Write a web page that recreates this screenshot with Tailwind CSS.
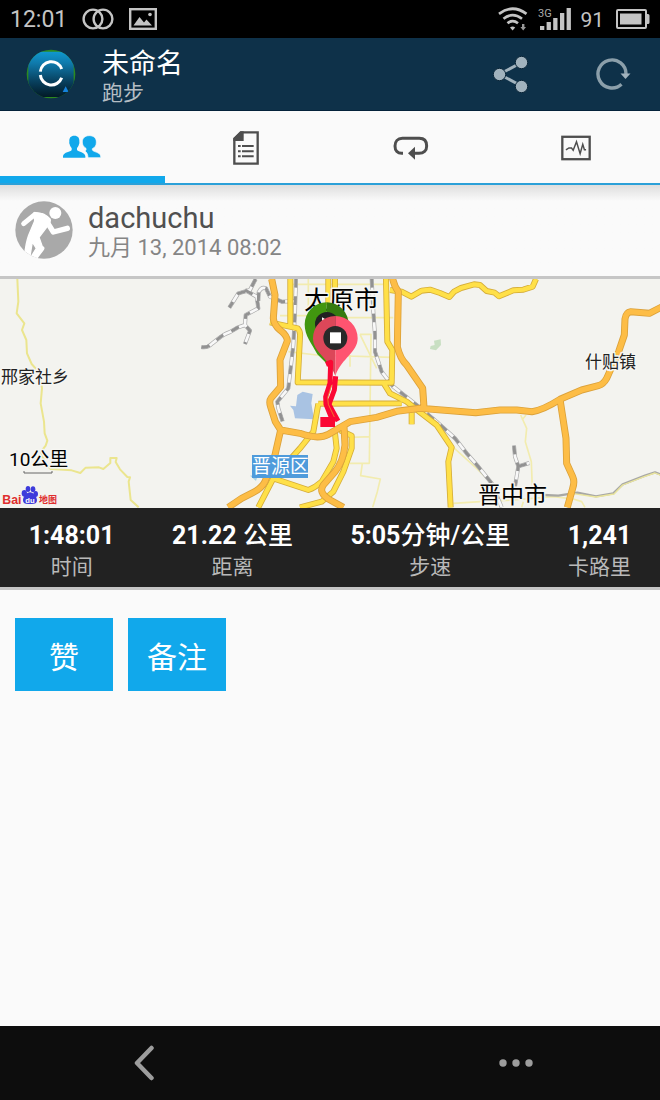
<!DOCTYPE html>
<html lang="zh-CN">
<head>
<meta charset="utf-8">
<meta name="viewport" content="width=device-width, initial-scale=1">
<title>未命名 - 跑步</title>
<script src="https://cdn.jsdelivr.net/npm/@tailwindcss/browser@4"></script>
</head>
<body class="flex min-h-screen flex-col bg-[#fafafa] font-[Roboto,'Noto_Sans_CJK_SC',sans-serif]">

<!-- Status bar -->
<div class="flex h-[38px] items-center justify-between bg-black pl-[10px] pr-[10px] text-[#c4c4c4]">
  <div class="flex items-center">
    <span class="pt-[2px] text-[23px] leading-[36px]">12:01</span>
    <svg class="ml-[15px] h-[22px] w-[32px]" viewBox="0 0 32 22" fill="none" stroke="currentColor" stroke-width="2.4"><circle cx="11" cy="11" r="9.400"/><circle cx="21" cy="11" r="9.400"/></svg>
    <svg class="ml-[15px] h-[22px] w-[28px]" viewBox="0 0 28 22"><rect x="1.200" y="1.200" width="25.600" height="19.600" fill="none" stroke="currentColor" stroke-width="2.400"/><path d="M4.500 17.500 10.500 9l4.500 5.500 2.500-3L23 17.500z" fill="currentColor"/><circle cx="21" cy="6.500" r="1.800" fill="currentColor"/></svg>
  </div>
  <div class="flex items-center">
    <svg class="h-[24px] w-[30px]" viewBox="0 0 30 24" fill="none" stroke="currentColor" stroke-width="2.700"><path d="M1 6.800Q14.600-3.300 28.500 6.800M5.500 11.800Q14.600 4.600 24 11.800M9.500 16.200Q14.600 12 20 16.200"/><path d="M12 20.500a4 4 0 0 1 5.200 0l-2.600 3z" fill="currentColor" stroke="none"/><path d="M24 17h2.400v3H28l-2.800 3.400L22.400 20H24z" fill="#999" stroke="none"/></svg>
    <svg class="ml-[10px] h-[24px] w-[34px]" viewBox="0 0 34 24" fill="currentColor"><text x="0" y="10" font-size="11" fill="#aaa" class="font-[Roboto]">3G</text><path d="M2 19h4.300v4H2zM8.600 15h4.300v8H8.600zM15.200 11h4.300v12h-4.300zM22 6h4.300v17H22zM28.600 1h4.300v22h-4.300z"/></svg>
    <span class="ml-[8px] pt-[2px] text-[21px] leading-[36px]">91</span>
    <svg class="ml-[12px] h-[20px] w-[34px]" viewBox="0 0 34 20"><rect x="1" y="1" width="29" height="18" rx="1" fill="none" stroke="currentColor" stroke-width="2"/><path d="M4 4.500h21.500v11H4zM31 5h1q1.500 0 1.500 1.500v7q0 1.500-1.500 1.500H31z" fill="currentColor"/></svg>
  </div>
</div>

<!-- Action bar -->
<header class="flex h-[73px] items-center justify-between border-b border-[#04223a] bg-[#0e3149] pl-[26px] pr-[29px]">
  <div class="flex items-center gap-[26px]">
    <svg class="h-[50px] w-[50px]" viewBox="77 146 150 150" role="img" aria-label="Connect">
      <defs>
        <linearGradient id="logo" x1="0" y1="0" x2="0" y2="1"><stop offset="0" stop-color="#1098cf"/><stop offset=".25" stop-color="#0f7aac"/><stop offset=".65" stop-color="#08415f"/><stop offset="1" stop-color="#021a27"/></linearGradient>
        <clipPath id="disc"><circle cx="152" cy="221" r="73"/></clipPath>
      </defs>
      <circle cx="152" cy="221" r="73" fill="#2c8a20"/>
      <g clip-path="url(#disc)"><rect x="84" y="154" width="136" height="136" rx="22" fill="url(#logo)"/><path d="M187 275l9-17 9 17z" fill="#1583dd"/></g>
      <path d="M120 214A33 33 0 0 1 184 206M120 224A33 33 0 0 0 184 232" fill="none" stroke="#fff" stroke-width="9"/>
    </svg>
    <div class="pt-[6px]">
      <h1 class="text-[27px] leading-[32px] text-white">未命名</h1>
      <p class="text-[21px] leading-[26px] text-[#b5bec4]">跑步</p>
    </div>
  </div>
  <div class="flex items-center gap-[64px]">
    <button aria-label="分享"><svg class="block h-[38px] w-[38px]" viewBox="0 0 38 38" fill="#a1b2bd" stroke="#a1b2bd"><path d="M28.500 7.500 6.500 19.300 28.500 31" fill="none" stroke-width="3"/><g stroke="#0a2538" stroke-width="1"><circle cx="28.500" cy="7.500" r="6.200"/><circle cx="6.500" cy="19.500" r="6.200"/><circle cx="28.500" cy="31.500" r="6.200"/></g></svg></button>
    <button aria-label="刷新"><svg class="block h-[36px] w-[36px]" viewBox="0 0 36 36"><path d="M26.500 28.200A14 14 0 1 1 31 18" fill="none" stroke="#8b9faa" stroke-width="3.400"/><path d="M25.500 17.500H35.500L30.500 23z" fill="#a1b2bd"/></svg></button>
  </div>
</header>

<!-- Tabs -->
<nav class="grid h-[74px] grid-cols-4 border-b-2 border-[#2ba0d8]" aria-label="活动">
  <button class="flex items-center justify-center border-b-[7px] border-[#11a8eb] pr-[2px] pt-[7px]" aria-label="社交" aria-current="page">
    <svg class="h-[24px] w-[38px]" viewBox="188 77 114 70" fill="#11a8eb"><path d="M222 78c-11 0-16 7-15 17 0 3-1 6 1 9 1 5 3 8 6 11v6c-3 6-24 6-26 18v5h67v-5c-2-12-20-11-25-18v-6c4-4 5-7 6-11 2-3 1-6 1-9 1-10-4-17-15-17z"/><path d="M267 78c-14 0-21 8-21 19 0 9 4 15 11 19 1 4 0 6-3 8 6 4 9 12 9 20h38v-5c-2-12-21-11-25-18v-4c9-4 12-10 12-20 0-11-7-19-21-19z" stroke="#fafafa" stroke-width="2"/></svg>
  </button>
  <button class="flex items-center justify-center pr-[3px] pt-px" aria-label="详情">
    <svg class="h-[34px] w-[26px]" viewBox="700 62 78 102"><path d="M723 66h51v94h-70V86z" fill="none" stroke="#4e4e4e" stroke-width="7"/><path d="M701 92V83l22-20h9v29z" fill="#4e4e4e"/><path d="M715 107h8M727 107h35M715 123h8M727 123h35M715 138h8M727 138h35" stroke="#4e4e4e" stroke-width="6"/></svg>
  </button>
  <button class="flex items-center justify-center pr-[3px] pt-px" aria-label="计圈">
    <svg class="h-[24px] w-[36px]" viewBox="190 76 108 72"><path d="M220 128h-4c-12 0-20-8-20-22s8-23 22-23h51c15 0 22 9 22 23s-9 22-23 22h-14" fill="none" stroke="#4e4e4e" stroke-width="9"/><path d="M235 128l21-20v39z" fill="#4e4e4e"/></svg>
  </button>
  <button class="flex items-center justify-center pr-[3px] pt-px" aria-label="图表">
    <svg class="h-[26px] w-[30px]" viewBox="693 74 91 78" fill="none" stroke="#4e4e4e"><rect x="697" y="79" width="83" height="68" stroke-width="7"/><path d="M708 119l9-6h8l5 7 10-26 11 36 8-28 5 16h5" stroke-width="4.500"/></svg>
  </button>
</nav>

<!-- Athlete -->
<section class="flex h-[94px] items-start border-b-[3px] border-[#c6c6c6] bg-linear-to-b from-[#dedede] to-[#fafafa] to-[16px] pl-[15px] pt-[16px]">
  <svg class="h-[58px] w-[58px] shrink-0" viewBox="44 273 174 174" role="img" aria-label="头像">
    <clipPath id="face"><circle cx="131" cy="360" r="86"/></clipPath>
    <circle cx="131" cy="360" r="86" fill="#a9a9a9"/>
    <g clip-path="url(#face)" fill="none" stroke="#fff" stroke-linecap="round" stroke-linejoin="round">
      <circle cx="165" cy="309" r="18" fill="#fff" stroke="none"/>
      <path d="M70 341 104 313 124 317" stroke-width="15"/>
      <path d="M139 334 159 366 201 355" stroke-width="16"/>
      <path d="M101 309Q130 305 149 327Q153 337 141 349L116 382 126 410Q134 413 128 420L110 444H90L108 415 96 396 88 444H72Q76 400 85 376L103 333z" fill="#fff" stroke="#fff" stroke-width="4"/>
    </g>
  </svg>
  <div class="ml-[15px] pt-px">
    <h2 class="text-[29px] leading-[32px] text-[#505050]">dachuchu</h2>
    <time class="block text-[22px] leading-[28px] text-[#858585]" datetime="2014-09-13T08:02">九月 13, 2014 08:02</time>
  </div>
</section>

<!-- Route map -->
<svg class="block h-[229px] w-full bg-[#f3f3ef]" viewBox="0 0 660 229" preserveAspectRatio="xMidYMid slice" role="img" aria-label="路线地图">
  <defs>
    <path id="minor" d="M52 12 55 80 50 115 73 145 66 165 79 195 81 235 95 267 120 295 126 340 122 385 132 440 134 475 142 497 137 512 123 530 135 565 152 582 215 586 241 594 257 578 297 577 310 582 331 564 331 549 350 549 347 561 360 583 382 606 390 607 386 620 392 675 416 697"/>
    <path id="rail" d="M604 216Q622 220 637 205L660 187Q672 177 690 171L712 158 735 150M767 12 750 45 715 55 688 98M735 45 770 65 775 100 737 120 735 150 750 167 735 207M775 78 776 52Q784 34 798 40L810 65 845 80 888 78M888 12 885 110 880 210 865 340 832 380 835 400 848 440M1115 12 1120 110 1125 180 1125 230 1145 290 1180 335 1250 390 1310 440 1365 490 1400 535 1435 575 1475 625 1505 697M1542 512 1545 545 1555 574 1549 610 1545 635M1555 574 1588 564"/>
    <g id="yellow">
      <path d="M871 12V150M985 12V90M1005 12V90M810 142 893 160Q902 170 900 185L893 322 1175 323 1177 225 1162 200 1158 12M955 386 1205 385M955 386 940 470 900 520 820 610 775 697M820 610 925 645Q945 638 965 620L1000 560 1010 520 1005 475M1020 466 1055 482V520L1030 590 1000 650 965 680 900 697M1150 323 1170 355 1220 380 1245 400 1310 450 1355 517 1345 560 1348 620 1352 697M1235 400V448"/>
      <path d="M1170 45 1205 50 1234 65 1265 47 1290 44 1320 54 1348 66 1362 50 1383 39 1422 28 1440 30 1460 48 1484 53 1497 64 1540 46 1570 44 1598 35 1608 12"/>
    </g>
    <path id="orange" d="M815 12 825 60 820 130Q822 150 840 165Q862 182 862 198L840 255 842 335 814 368Q806 378 812 396L826 440 842 465 900 475Q955 495 985 478L1050 440 1130 427 1190 409 1260 400 1325 405 1427 413 1500 405 1550 405 1596 410Q1630 405 1680 373L1745 345 1795 332Q1810 328 1820 310L1856 230 1873 180 1875 132Q1878 112 1892 110L1948 115 1985 96M842 465 825 540 795 620Q785 640 760 652L725 670 685 697M1032 455 1035 510Q1030 560 1005 590L970 630Q955 652 985 672L1030 697M1176 0Q1180 30 1195 50L1192 215Q1200 250 1220 270L1268 340 1272 397M1680 373 1698 490 1700 565 1718 605Q1725 620 1718 640L1702 697"/>
  </defs>
  <g transform="translate(0 -4) scale(.33333)" fill="none" stroke-linejoin="round">
    <g stroke="#f2ecaf" stroke-width="5"><path d="M840 122H980M1010 128H1180M865 230 950 240 1175 247M1080 178H1113L1108 565H1050M1080 178 1130 280M1110 485 1055 487M1087 565 1082 602 1141 612 1132 650 1118 697M870 28H1150M925 12V120M1050 240V275M1360 517 1430 580 1480 630M1562 420 1580 460 1576 500 1594 560 1597 640M1566 435 1578 420M1360 685 1440 680 1540 675 1660 665 1720 672 1745 680 1755 697M1565 697 1570 680"/></g>
    <path d="M1630 660 1675 662 1732 653 1788 664 1840 655 1868 628 1935 602 1965 592 1985 600" stroke="#a8a8a5" stroke-width="7"/>
    <path d="M1720 656 1788 666 1842 657 1868 630 1935 604 1965 594 1985 602" stroke="#ebe69d" stroke-width="4"/>
    <use href="#minor" stroke="#ebe58e" stroke-width="6"/>
    <use href="#rail" stroke="#aaa" stroke-width="12"/>
    <use href="#rail" stroke="#f8f8f8" stroke-width="8"/>
    <use href="#rail" stroke="#929292" stroke-width="9" stroke-dasharray="26 26"/>
    <path d="M892 360 908 350 938 357 934 385 942 433 885 430 880 405 870 392 888 394z" fill="#a9c3e3"/>
    <path d="M1302 197 1322 193 1323 210 1308 226 1290 222 1292 213 1304 210z" fill="#c8dfc2"/>
    <path d="M750 602 775 598 768 618z" fill="#a9d3e3"/>
    <use href="#yellow" stroke="#d5ad39" stroke-width="18"/>
    <use href="#yellow" stroke="#ffe048" stroke-width="13"/>
    <use href="#orange" stroke="#dba13a" stroke-width="21"/>
    <use href="#orange" stroke="#fdbd46" stroke-width="16"/>
  </g>
  <g fill="#222" stroke="#f6f6f2" stroke-width="3" stroke-linejoin="round" paint-order="stroke" font-family="Noto Sans CJK SC, sans-serif">
    <text x="1" y="104" font-size="17">邢家社乡</text>
    <text x="585" y="89" font-size="17">什贴镇</text>
    <g fill="#000"><text x="304" y="30" font-size="25">太原市</text><text x="478" y="224" font-size="23">晋中市</text></g>
    <text x="9" y="187" font-size="19" fill="#000" font-family="Roboto, Noto Sans CJK SC, sans-serif">10公里</text>
  </g>
  <path d="M24 192V194H52V192" fill="none" stroke="#666" stroke-width="1"/>
  <rect x="252" y="176" width="56" height="23" fill="#4f9bdb"/>
  <text x="252" y="194" font-size="19" fill="#fff" font-family="Noto Sans CJK SC, sans-serif">晋源区</text>
  <!-- Recorded route and its start and stop pins -->
  <g transform="translate(220 -4) scale(.33333)">
    <path d="M320 82a66 66 0 0 0-66 66c0 36 22 58 38 90l30 30z" fill="#41960f"/>
    <path d="M320 82a66 66 0 0 1 66 66h-66z" fill="#357b10"/>
    <circle cx="321" cy="147" r="36" fill="#222"/><path d="M306 127l25 14-25 14z" fill="#fff"/>
    <path d="M346 123a67 67 0 0 0-67 67c0 42 47 58 67 113z" fill="#dc4759"/>
    <path d="M346 123a67 67 0 0 1 67 67c0 42-47 58-67 113z" fill="#ff5470"/>
    <circle cx="346" cy="189" r="36" fill="#292929"/><rect x="330" y="172" width="33" height="33" fill="#fff"/>
    <path d="M347 304 343 345 327 388 354 438M318 268 332 262 330 325 317 365 318 388 336 432" fill="none" stroke="#fb0734" stroke-width="15" stroke-linejoin="round"/>
    <path d="M335 330 323 368 325 388 344 428" fill="none" stroke="#e8b02c" stroke-width="2"/>
    <path d="M301 426H345V456H301z" fill="#fb0734"/>
  </g>
  <!-- Map provider -->
  <g transform="translate(0 -4) scale(.33333)" font-weight="700" fill="#df2e2e">
    <text x="7" y="687" font-size="37" font-family="Liberation Sans, sans-serif">Bai</text>
    <g fill="#3d3bdb"><ellipse cx="73" cy="655" rx="8" ry="10"/><ellipse cx="84" cy="642" rx="7" ry="9"/><ellipse cx="99" cy="643" rx="7" ry="9"/><ellipse cx="107" cy="657" rx="7" ry="9"/><path d="M90 652c-10 0-21 14-21 24s8 12 21 11c13 1 21-1 21-11s-11-24-21-24z"/></g>
    <text x="76" y="683" font-size="23" fill="#fff" font-family="Liberation Sans, sans-serif">du</text>
    <text x="117" y="684" font-size="27" font-family="Noto Sans CJK SC, sans-serif">地图</text>
  </g>
</svg>

<!-- Totals -->
<dl class="flex h-[82px] justify-around border-b-[3px] border-[#c6c6c6] bg-[#222] pt-[12px] text-center">
  <div class="flex flex-col-reverse justify-end"><dt class="text-[21px] leading-[30px] text-[#b9b9b9]">时间</dt><dd class="text-[25px] font-bold leading-[32px] text-white">1:48:01</dd></div>
  <div class="flex flex-col-reverse justify-end"><dt class="text-[21px] leading-[30px] text-[#b9b9b9]">距离</dt><dd class="text-[25px] font-bold leading-[32px] text-white">21.22 <span class="font-medium">公里</span></dd></div>
  <div class="flex flex-col-reverse justify-end"><dt class="text-[21px] leading-[30px] text-[#b9b9b9]">步速</dt><dd class="text-[25px] font-bold leading-[32px] text-white">5:05<span class="font-medium">分钟/公里</span></dd></div>
  <div class="flex flex-col-reverse justify-end"><dt class="text-[21px] leading-[30px] text-[#b9b9b9]">卡路里</dt><dd class="text-[25px] font-bold leading-[32px] text-white">1,241</dd></div>
</dl>

<main class="flex flex-1 items-start gap-[15px] px-[15px] pt-[28px]">
  <button class="h-[73px] w-[98px] bg-[#11a8eb] pt-[5px] text-[30px] text-white">赞</button>
  <button class="h-[73px] w-[98px] bg-[#11a8eb] pt-[5px] text-[30px] text-white">备注</button>
</main>

<!-- System navigation -->
<footer class="flex h-[74px] items-center justify-between bg-[#0d0d0d] pl-[133px] pr-[126px]">
  <button aria-label="返回"><svg class="block h-[36px] w-[22px]" viewBox="0 0 22 36"><path d="M18.500 3 4 18 18.500 33" fill="none" stroke="#9d9d9d" stroke-width="4.500" stroke-linecap="round" stroke-linejoin="round"/></svg></button>
  <button aria-label="更多"><svg class="block h-[8px] w-[36px]" viewBox="0 0 36 8" fill="#9d9d9d"><circle cx="5" cy="4" r="3.700"/><circle cx="18" cy="4" r="3.700"/><circle cx="31" cy="4" r="3.700"/></svg></button>
</footer>
</body>
</html>
